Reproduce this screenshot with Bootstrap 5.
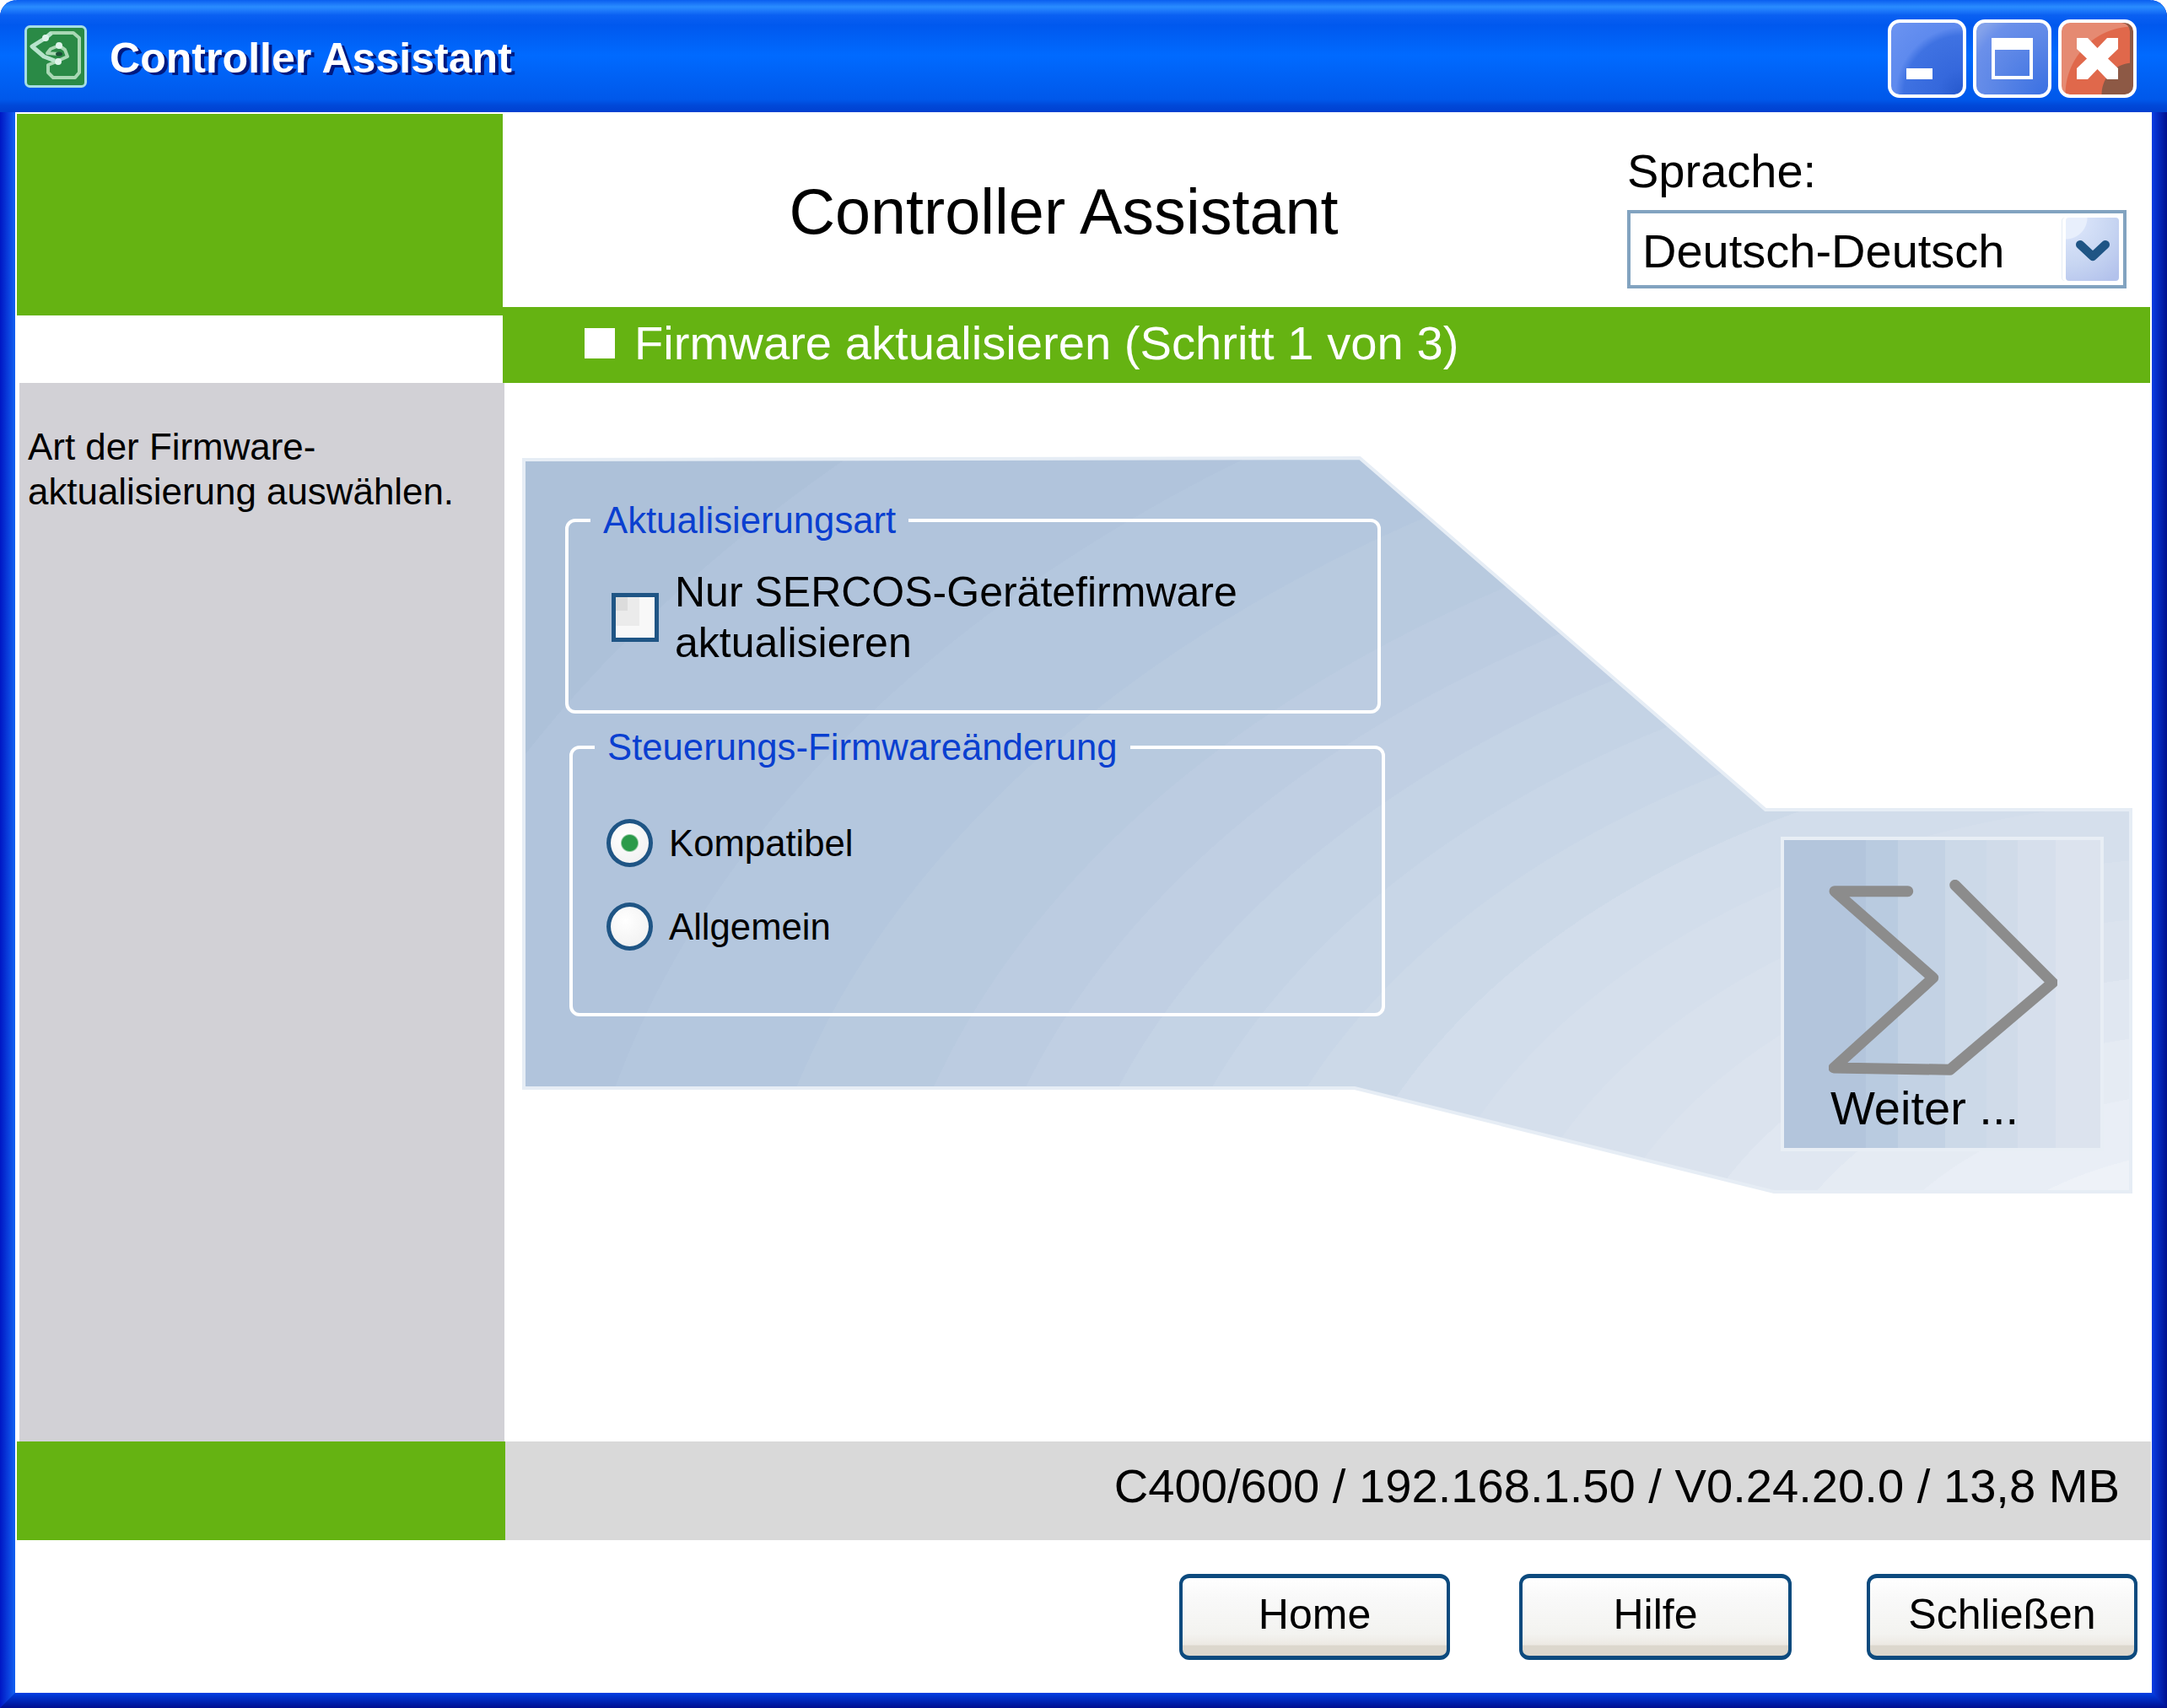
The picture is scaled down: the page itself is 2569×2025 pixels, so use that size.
<!DOCTYPE html>
<html lang="de">
<head>
<meta charset="utf-8">
<title>Controller Assistant</title>
<link href="https://cdn.jsdelivr.net/npm/bootstrap@5.3.0/dist/css/bootstrap.min.css" rel="stylesheet">
<style>
html,body{margin:0;background:#fff}
body{font-family:"Liberation Sans",Arial,sans-serif;color:#000;overflow:hidden}
.win{width:2569px;height:2025px;border-radius:20px 20px 0 0;overflow:hidden;
 background:linear-gradient(90deg,#0016c4,#1262f2) left top/18px 100% no-repeat,linear-gradient(90deg,#0a3ee4,#001090) right top/18px 100% no-repeat}
.titlebar{height:133px;padding:0 36px 0 29px;background:linear-gradient(180deg,#0a5ef0 0,#2a8cff 8px,#1f7cfb 12px,#0a60f2 18px,#0058ee 30px,#006aff 66px,#0058ea 118px,#0048d8 125px,#0040d0 133px)}
.titletext{font-size:50.1px;font-weight:700;line-height:56px;color:#fff;margin:4px 0 0 27px;text-shadow:4px 3px 0 #001a80}
.winbtn{width:93px;height:93px;border:4px solid #fff;border-radius:14px;padding:0;margin-top:6px}
.winbtn svg{display:block}
.wb-min{background:radial-gradient(circle at 100% 100%,#2558cc 0,#3568dc 30px,#3f72e2 70px,#5e8aee 80px,#6f96f2 130px)}
.wb-max{background:radial-gradient(circle at 100% 100%,#3a70e2 0,#5a85e6 60px,#6b90ea 95px,#84a2ea 110px)}
.wb-close{background:radial-gradient(circle at 100% 100%,#8d5945 0 37px,#e0684b 38px 80px,#e58a72 81px);box-shadow:inset -4px 0 0 #8d5945}
.client{height:1874px;margin:0 18px}
.client-top{height:321px}
.brand-block{width:576px;height:239px;margin:2px 0 0 2px;background:#65b312;flex:none}
.top-right{min-width:0}
.head-row{height:231px}
.head-title{font-size:75.6px;line-height:86px;padding:4px 3px 0 0}
.lang-box{width:592px;margin-right:30px;padding-top:42px;flex:none}
.lang-label{font-size:56px;line-height:56px}
.lang-select{height:93px;margin-top:18px;border:4px solid #82a3c0;background:#fff;padding:5px 5px 5px 14px;font-size:56px;line-height:1;display:flex;align-items:center;justify-content:space-between}
.lang-value{margin-top:5px}
.lang-arrow{width:63px;height:75px;border-radius:4px;display:flex;align-items:center;justify-content:center;flex:none;padding-top:4px;background:radial-gradient(circle at 0 0,#e8effc 0 25px,#d6e1f8 26px,#c8d6f2 55px,#b3c2ec 90px);box-shadow:-4px 0 0 #fff,-5px 0 0 #e4edf5}
.step-bar{height:90px;margin-right:2px;background:#65b312;color:#fff;padding:0 0 4px 97px;font-size:56.2px;gap:23px}
.step-sq{width:36px;height:36px;background:#fff;flex:none}
.client-mid{height:1255px}
.side{width:575px;margin-left:5px;background:#d2d1d6;font-size:43.9px;line-height:53px;padding:49px 0 0 10px;flex:none}
.stage{width:1953px;flex:none}
.stage-bg{position:absolute;left:0;top:0}
.fields{margin:137px 0 0 72px;width:972px;z-index:1}
.group{border:4px solid #fff;border-radius:12px;width:967px;margin:0;padding:0}
.group legend{float:none;width:auto;margin:0 0 0 26px;padding:0 15px;font-size:43.7px;line-height:52px;color:#0a3fd0}
.group-a-in{padding:29px 40px 50px 51px}
.group-b{margin:14px 0 0 5px}
.group-b-in{padding:59px 40px 74px 40px}
.sq-check.form-check-input{width:56px;height:58px;margin:0;border:5px solid #1f5585;border-radius:0;flex:none;
 background:linear-gradient(#dcdcdc,#dcdcdc) 0 0/14px 16px no-repeat,linear-gradient(#ebebeb,#ebebeb) 0 0/28px 34px no-repeat,#f8f8f8}
.sq-label{font-size:50px;line-height:60px;margin-left:19px}
.dot-radio.form-check-input{width:55px;height:57px;margin:0;border:5px solid #1f5585;background:radial-gradient(circle at 40% 35%,#fff,#eeeeee);flex:none}
.dot-radio.form-check-input:checked[type=radio]{background:radial-gradient(circle at 50% 50%,#2b9a4a 0 9px,rgba(43,154,74,0) 11px),radial-gradient(circle at 40% 35%,#fff,#eeeeee);border-color:#1f5585}
.dot-label{font-size:43.7px;line-height:57px;margin-left:19px}
.gap-radio{margin-top:42px}
.next-tile{width:383px;height:373px;margin:538px 57px 0 auto;border:4px solid #e8eef5;z-index:1;flex:none;
 background:linear-gradient(90deg,#b3c5dc 0 26%,#b9cbe0 26% 36%,#c3d2e4 36% 51%,#ccd9e8 51% 64%,#d0dbe9 64% 74%,#d6dfec 74% 86%,#dce3ee 86%)}
.next-icon{display:block;margin:47px 0 0 53px}
.next-text{font-size:56px;line-height:56px;margin:11px 0 0 55px}
.client-status{height:117px}
.status-green{width:579px;margin-left:2px;background:#65b312;flex:none}
.status-grey{margin-right:1px;background:#d9d9d9;font-size:56.15px;line-height:56px;padding:25px 37px 0 0;text-align:right}
.client-actions{height:181px;padding:40px 17px 0 0;gap:82px}
.act-btn.btn{height:102px;width:321px;padding:0 0 6px;border:4px solid #0c4a7e;border-top-width:5px;border-bottom-width:5px;border-radius:12px;color:#000;font-size:50px;line-height:1;
 background:linear-gradient(180deg,#fff 0,#f9f9f9 25%,#f3f3f0 72%,#ede9e3 86%,#dcd7cd 87%,#dcd7cd 100%)}
.act-wide.btn{width:323px}
.act-last{margin-left:7px}
.bottom-rail{height:18px;background:linear-gradient(180deg,#0040e4,#000e90);clip-path:polygon(0 100%,18px 0,calc(100% - 18px) 0,100% 100%)}
</style>
</head>
<body>
<div class="win d-flex flex-column">
  <header class="titlebar d-flex align-items-center">
    <svg width="74" height="74" viewBox="0 0 74 74" aria-hidden="true" class="flex-shrink-0">
      <rect x="1.5" y="1.5" width="71" height="71" rx="5" fill="#2a8a46" stroke="#a6dde4" stroke-width="3"/>
      <path d="M31 9H58L65 15V56L60 62H34L28 56V47L38 43L51 37L48 29L41 24L31 28L27 33L41 34" fill="none" stroke="#a9d8b4" stroke-width="4" stroke-linejoin="round"/>
      <path d="M32 9L25 15L9 25L23 37L36 42" fill="none" stroke="#b8e4cc" stroke-width="5" stroke-linejoin="round"/>
      <circle cx="25" cy="15" r="4" fill="#dff3ea"/><circle cx="41" cy="24" r="4" fill="#dff3ea"/><circle cx="40" cy="43" r="4" fill="#dff3ea"/>
      <ellipse cx="41" cy="34" rx="4" ry="2.500" fill="#1d4f3a"/>
    </svg>
    <div class="titletext">Controller Assistant</div>
    <div class="ms-auto d-flex gap-2">
      <button class="winbtn wb-min" type="button" aria-label="Minimieren"><svg width="85" height="85" viewBox="0 0 85 85"><rect x="18" y="54" width="31" height="13" fill="#fff"/></svg></button>
      <button class="winbtn wb-max" type="button" aria-label="Maximieren"><svg width="85" height="85" viewBox="0 0 85 85"><path fill="#fff" fill-rule="evenodd" d="M18 18H67V67H18ZM22 32V63H63V32Z"/></svg></button>
      <button class="winbtn wb-close" type="button" aria-label="Schließen"><svg width="85" height="85" viewBox="0 0 85 85"><path fill="#fff" d="M18 18H31L42.500 30L54 18H67V31L55 42.500L67 54V67H54L42.500 55L31 67H18V54L30 42.500L18 31Z"/></svg></button>
    </div>
  </header>

  <div class="client bg-white">
    <div class="client-top d-flex">
      <div class="brand-block"></div>
      <div class="top-right flex-grow-1">
        <div class="head-row d-flex">
          <div class="head-title flex-grow-1 d-flex align-items-center justify-content-center">Controller Assistant</div>
          <div class="lang-box">
            <div class="lang-label">Sprache:</div>
            <div class="lang-select">
              <span class="lang-value">Deutsch-Deutsch</span>
              <span class="lang-arrow"><svg width="40" height="27" viewBox="0 0 40 27"><path d="M5 6L20 20L35 6" fill="none" stroke="#1f5585" stroke-width="10" stroke-linecap="round" stroke-linejoin="round"/></svg></span>
            </div>
          </div>
        </div>
        <div class="step-bar d-flex align-items-center"><span class="step-sq"></span><span>Firmware aktualisieren (Schritt 1 von 3)</span></div>
      </div>
    </div>

    <div class="client-mid d-flex">
      <aside class="side">Art der Firmware-<br>aktualisierung auswählen.</aside>
      <main class="stage position-relative d-flex align-items-start">
        <svg class="stage-bg" width="1953" height="1255" viewBox="0 0 1953 1255" aria-hidden="true">
          <defs>
            <radialGradient id="panelFill" gradientUnits="userSpaceOnUse" cx="2050" cy="1150" r="2600" gradientTransform="matrix(1 0 0 0.6667 0 383.3)">
              <stop offset="0.10" stop-color="#eef2f8"/><stop offset="0.14" stop-color="#eef2f8"/>
              <stop offset="0.14" stop-color="#e9eef6"/><stop offset="0.18" stop-color="#e9eef6"/>
              <stop offset="0.18" stop-color="#e5ebf3"/><stop offset="0.22" stop-color="#e5ebf3"/>
              <stop offset="0.22" stop-color="#e0e7f1"/><stop offset="0.26" stop-color="#e0e7f1"/>
              <stop offset="0.26" stop-color="#dbe3ee"/><stop offset="0.30" stop-color="#dbe3ee"/>
              <stop offset="0.30" stop-color="#d8e1ed"/><stop offset="0.34" stop-color="#d8e1ed"/>
              <stop offset="0.34" stop-color="#d5dfec"/><stop offset="0.38" stop-color="#d5dfec"/>
              <stop offset="0.38" stop-color="#d2ddeb"/><stop offset="0.42" stop-color="#d2ddeb"/>
              <stop offset="0.42" stop-color="#ccd9e8"/><stop offset="0.46" stop-color="#ccd9e8"/>
              <stop offset="0.46" stop-color="#c8d6e7"/><stop offset="0.50" stop-color="#c8d6e7"/>
              <stop offset="0.50" stop-color="#c4d3e5"/><stop offset="0.54" stop-color="#c4d3e5"/>
              <stop offset="0.54" stop-color="#c0cfe3"/><stop offset="0.58" stop-color="#c0cfe3"/>
              <stop offset="0.58" stop-color="#bccce1"/><stop offset="0.62" stop-color="#bccce1"/>
              <stop offset="0.62" stop-color="#b8cadf"/><stop offset="0.68" stop-color="#b8cadf"/>
              <stop offset="0.68" stop-color="#b4c7de"/><stop offset="0.76" stop-color="#b4c7de"/>
              <stop offset="0.76" stop-color="#b1c4dc"/><stop offset="0.88" stop-color="#b1c4dc"/>
              <stop offset="0.88" stop-color="#adc1d9"/><stop offset="1" stop-color="#adc1d9"/>
            </radialGradient>
          </defs>
          <polygon points="23,91 1014,89 1495,506 1928,506 1928,959 1505,959 1008,836 23,836" fill="url(#panelFill)" stroke="#e6edf5" stroke-width="4"/>
        </svg>
        <div class="fields position-relative">
          <fieldset class="group">
            <legend>Aktualisierungsart</legend>
            <div class="group-a-in d-flex align-items-center">
              <input class="form-check-input sq-check" type="checkbox" id="onlySercos">
              <label class="sq-label" for="onlySercos">Nur SERCOS-Gerätefirmware<br>aktualisieren</label>
            </div>
          </fieldset>
          <fieldset class="group group-b">
            <legend>Steuerungs-Firmwareänderung</legend>
            <div class="group-b-in">
              <div class="d-flex align-items-center">
                <input class="form-check-input dot-radio" type="radio" name="fwChange" id="fwCompat" checked>
                <label class="dot-label" for="fwCompat">Kompatibel</label>
              </div>
              <div class="d-flex align-items-center gap-radio">
                <input class="form-check-input dot-radio" type="radio" name="fwChange" id="fwGeneral">
                <label class="dot-label" for="fwGeneral">Allgemein</label>
              </div>
            </div>
          </fieldset>
        </div>
        <div class="next-tile position-relative">
          <svg class="next-icon" width="271" height="232" viewBox="0 0 271 232" aria-hidden="true">
            <path d="M93.700 13.700H7L123.700 116.300L6 223L143.700 225.300L265.300 122L149.700 6.300" fill="none" stroke="#8c8c8c" stroke-width="13" stroke-linecap="round" stroke-linejoin="round"/>
          </svg>
          <div class="next-text">Weiter ...</div>
        </div>
      </main>
    </div>

    <div class="client-status d-flex">
      <div class="status-green"></div>
      <div class="status-grey flex-grow-1">C400/600 / 192.168.1.50 / V0.24.20.0 / 13,8 MB</div>
    </div>

    <div class="client-actions d-flex justify-content-end align-items-start">
      <button type="button" class="btn act-btn">Home</button>
      <button type="button" class="btn act-btn act-wide">Hilfe</button>
      <button type="button" class="btn act-btn act-last">Schließen</button>
    </div>
  </div>
  <div class="bottom-rail"></div>
</div>
<script src="https://cdn.jsdelivr.net/npm/bootstrap@5.3.0/dist/js/bootstrap.bundle.min.js"></script>
</body>
</html>
